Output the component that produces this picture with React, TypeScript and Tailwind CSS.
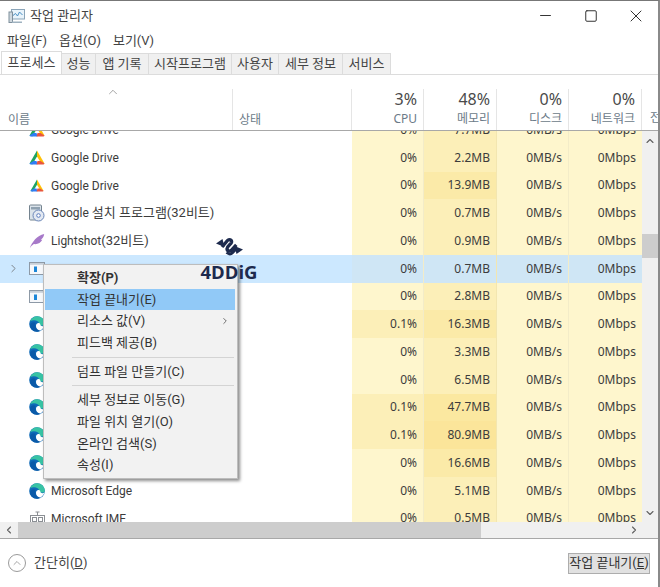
import { ChevronDown, ChevronLeft, ChevronRight, ChevronUp, Minus, Square, X } from 'lucide-react';

const font = { fontFamily: '"Noto Sans", "Noto Sans CJK KR", sans-serif' };
const nameFont = { fontFamily: 'Roboto, "Noto Sans CJK KR", sans-serif' };

type RowData = {
	latin?: string;
	name: string;
	icon: 'drive' | 'driveSmall' | 'setup' | 'feather' | 'app' | 'edge' | 'ime' | 'none';
	cpu: string;
	mem: string;
	memBg: string;
	selected?: boolean;
};

const rows: RowData[] = [
	{ latin: 'Google Drive', name: '', icon: 'drive', cpu: '0%', mem: '7.7MB', memBg: 'bg-[#fcefb8]' },
	{ latin: 'Google Drive', name: '', icon: 'drive', cpu: '0%', mem: '2.2MB', memBg: 'bg-[#fcefb8]' },
	{ latin: 'Google Drive', name: '', icon: 'driveSmall', cpu: '0%', mem: '13.9MB', memBg: 'bg-[#fbeaa8]' },
	{ latin: 'Google ', name: '설치 프로그램(32비트)', icon: 'setup', cpu: '0%', mem: '0.7MB', memBg: 'bg-[#fcefb8]' },
	{ latin: 'Lightshot', name: '(32비트)', icon: 'feather', cpu: '0%', mem: '0.9MB', memBg: 'bg-[#fcefb8]' },
	{ name: '', icon: 'app', cpu: '0%', mem: '0.7MB', memBg: 'bg-[#cfe6f5]', selected: true },
	{ name: '', icon: 'app', cpu: '0%', mem: '2.8MB', memBg: 'bg-[#fcefb8]' },
	{ name: '', icon: 'edge', cpu: '0.1%', mem: '16.3MB', memBg: 'bg-[#fbeaa8]' },
	{ name: '', icon: 'edge', cpu: '0%', mem: '3.3MB', memBg: 'bg-[#fcefb8]' },
	{ name: '', icon: 'edge', cpu: '0%', mem: '6.5MB', memBg: 'bg-[#fcefb8]' },
	{ name: '', icon: 'edge', cpu: '0.1%', mem: '47.7MB', memBg: 'bg-[#fbe8a0]' },
	{ name: '', icon: 'edge', cpu: '0.1%', mem: '80.9MB', memBg: 'bg-[#fbe59a]' },
	{ name: '', icon: 'edge', cpu: '0%', mem: '16.6MB', memBg: 'bg-[#fbeaa8]' },
	{ latin: 'Microsoft Edge', name: '', icon: 'edge', cpu: '0%', mem: '5.1MB', memBg: 'bg-[#fcefb8]' },
	{ latin: 'Microsoft IME', name: '', icon: 'ime', cpu: '0%', mem: '0.5MB', memBg: 'bg-[#fcefb8]' },
];

function DriveIcon({ size }: { size: number }) {
	return (
		<svg width={size} height={size - 1} viewBox="0 0 16 15">
			<path d="M8 .5 .5 13.500l2.800 1L8 6.500z" fill="#1fa463" />
			<path d="M8 .5l7.500 13-3 .3L8 6.500z" fill="#ffc107" />
			<path d="M.5 13.500c.3.800.8 1 1.500 1h6.500l-1-3.500H4.500z" fill="#2f7cf6" />
			<path d="M15.500 13.500c-.3.800-.8 1-1.500 1H7.500l1-3.500h3z" fill="#e8543f" />
		</svg>
	);
}

function EdgeIcon() {
	return (
		<svg width="16" height="16" viewBox="0 0 16 16">
			<circle cx="8" cy="8" r="7.800" fill="#0e6ab8" />
			<path d="M1 5.500C2.200 2.200 5 .2 8 .2c4.300 0 7.800 3.200 7.800 7.400 0 .8-.2 1.500-.8 2H10c0-2 .4-3-1-4C6.500 4 3.500 3.800 1 5.500z" fill="#38c3a4" />
			<path d="M7 9.500c.2-2 2-3 3.500-2.200 1 .6.7 1.800 1.500 2.500.8.600 2.200.500 3.300 0-.7 2.300-2.800 4.500-5 5.200-2.200-1-3.500-3-3.300-5.500z" fill="#fff" />
			<path d="M6.300 9.500c.3 2.600 2.400 4.900 5 4.900-1 .9-2.200 1.400-3.400 1.400-4 0-6.800-3.100-6.800-6.200 0-2 1.600-3.400 3.400-3.400.9 0 1.600.3 2.200.8-.4.6-.5 1.500-.4 2.500z" fill="#0a5aa8" />
		</svg>
	);
}

function AppIcon() {
	return (
		<svg width="16" height="13" viewBox="0 0 16 13">
			<rect x=".5" y=".5" width="15" height="12" fill="#f6f8fb" stroke="#8d99a6" />
			<rect x="1" y="1" width="14" height="1.800" fill="#c7d0d9" />
			<rect x="5" y="4.500" width="3" height="5.500" fill="#1b86d8" />
		</svg>
	);
}

function SetupIcon() {
	return (
		<svg width="18" height="18" viewBox="0 0 18 18">
			<rect x="1.500" y="1" width="12" height="15" rx="1" fill="#dbe3ea" stroke="#74838f" />
			<rect x="3" y="3" width="9" height="2.500" fill="#8fa1b0" />
			<circle cx="10.500" cy="11.500" r="5.500" fill="#e3e9f2" stroke="#6a86b8" />
			<circle cx="10.500" cy="11.500" r="1.800" fill="#fff" stroke="#5b7cc0" />
		</svg>
	);
}

function FeatherIcon() {
	return (
		<svg width="16" height="16" viewBox="0 0 16 16">
			<path d="M.8 15.200C3 9 8 2.500 15.200 1c-.4 3-1.700 4.800-3.400 5.500.7.400 1.100.4 1.500.3-1.500 3-4.600 4.800-8.500 4.300-1.500 1.100-3 2.500-4 4.100z" fill="#a779c9" />
		</svg>
	);
}

function ImeIcon() {
	return (
		<svg width="15" height="14" viewBox="0 0 15 14" fill="none" stroke="#8b8f94">
			<rect x=".5" y="4.500" width="14" height="8" />
			<rect x="2.500" y="6.500" width="4" height="4" />
			<rect x="8.500" y="6.500" width="4" height="4" />
			<path d="M7.500 4.500V1M5.500 1h4" />
		</svg>
	);
}

function TaskIcon() {
	return (
		<svg width="17" height="16" viewBox="0 0 17 16">
			<rect x="3.500" y="1.500" width="13" height="9.500" fill="#e8f3fb" stroke="#8aa4b8" />
			<path d="M5 7.500l2.500-2 2 2.500 2-4 3 3" fill="none" stroke="#4a90c4" />
			<rect x="1" y="4" width="3.500" height="10.500" fill="#cfd8df" stroke="#7f8f9c" />
			<path d="M4 13.500h10v1.500H4z" fill="#9fb2c0" />
		</svg>
	);
}

function RowIcon({ icon }: { icon: RowData['icon'] }) {
	if (icon === 'drive') return <DriveIcon size={16} />;
	if (icon === 'driveSmall') return <DriveIcon size={14} />;
	if (icon === 'edge') return <EdgeIcon />;
	if (icon === 'app') return <AppIcon />;
	if (icon === 'setup') return <SetupIcon />;
	if (icon === 'feather') return <FeatherIcon />;
	if (icon === 'ime') return <ImeIcon />;
	return null;
}

function Row({ row }: { row: RowData }) {
	const base = row.selected ? 'bg-[#cce8ff]' : '';
	const cell = row.selected ? 'bg-[#cfe6f5]' : 'bg-[#fef6cd]';
	const cpuBg = row.selected ? 'bg-[#cfe6f5]' : row.cpu === '0.1%' ? 'bg-[#fcefb8]' : 'bg-[#fef6cd]';
	return (
		<div className={`flex h-[27.75px] shrink-0 items-center text-[12px] text-[#3c3c3c] ${base}`}>
			<div className="flex h-full w-[233px] shrink-0 items-center">
				<span className="flex w-[26px] shrink-0 justify-start pl-[7px]">
					{row.selected && <ChevronRight size={13} strokeWidth={1.800} className="text-[#7a8288]" />}
				</span>
				<span className="flex w-[22px] shrink-0 justify-center">
					<RowIcon icon={row.icon} />
				</span>
				<span style={nameFont} className="whitespace-pre pl-[3px] text-[13px]">
					{row.latin && <span className="text-[12px]">{row.latin}</span>}
					{row.name}
				</span>
			</div>
			<div className="h-full w-[119px] shrink-0" />
			<div className={`flex h-full w-[72px] shrink-0 items-center justify-end border-r border-[#f3ecc8] pr-[6px] ${cpuBg}`}>{row.cpu}</div>
			<div className={`flex h-full w-[73px] shrink-0 items-center justify-end border-r border-[#f3e6b0] pr-[6px] ${row.memBg}`}>{row.mem}</div>
			<div className={`flex h-full w-[72px] shrink-0 items-center justify-end border-r border-[#f3ecc8] pr-[6px] ${cell}`}>0MB/s</div>
			<div className={`flex h-full w-[73px] shrink-0 items-center justify-end pr-[6px] ${cell}`}>0Mbps</div>
		</div>
	);
}

function HeaderCell({ pct, label, width }: { pct: string; label: string; width: string }) {
	return (
		<div className={`flex h-full shrink-0 flex-col items-end border-r border-[#e5e5e5] pr-[6px] ${width}`}>
			<span className="text-[16px] leading-[20px] text-[#4a4a4a]">{pct}</span>
			<span className="mt-[2px] text-[12px] leading-[16px] text-[#6b7a88]">{label}</span>
		</div>
	);
}

function MenuItem({ label, bold, active, arrow }: { label: string; bold?: boolean; active?: boolean; arrow?: boolean }) {
	return (
		<div className={`ml-[1px] mr-[2px] flex h-[22px] items-center justify-between pl-[32px] pr-[5px] text-[13px] ${bold ? 'font-bold' : ''} ${active ? 'bg-[#91c9f7]' : ''}`}>
			<span style={nameFont} className="whitespace-nowrap">{label}</span>
			{arrow && <ChevronRight size={10} strokeWidth={2} className="text-[#555]" />}
		</div>
	);
}

export default function App() {
	return (
		<div style={font} className="relative flex h-[587px] w-[660px] flex-col overflow-hidden border-r-2 border-t border-r-[#8a8a8a] border-t-[#777] bg-white text-[#333]">
			{/* title bar */}
			<div className="flex h-[29px] shrink-0 items-center pl-[8px]">
				<TaskIcon />
				<span style={nameFont} className="ml-[5px] text-[13px] text-[#444]">작업 관리자</span>
				<div className="ml-auto flex items-center text-[#333]">
					<span className="flex w-[45px] justify-center"><Minus size={17} strokeWidth={1.400} /></span>
					<span className="flex w-[45px] justify-center"><Square size={14} strokeWidth={1.700} /></span>
					<span className="flex w-[45px] justify-center"><X size={20} strokeWidth={1.200} /></span>
				</div>
			</div>
			{/* menu */}
			<div style={nameFont} className="flex h-[22px] shrink-0 items-center gap-[12px] pl-[7px] text-[13px] text-[#444]">
				<span>파일(F)</span>
				<span>옵션(O)</span>
				<span>보기(V)</span>
			</div>
			{/* tabs */}
			<div style={nameFont} className="flex h-[23px] shrink-0 items-end border-b border-[#dcdcdc] pl-[1px] text-[13px] text-[#444]">
				<div className="flex h-[23px] w-[61px] items-center justify-center border border-b-0 border-[#dcdcdc] bg-white">프로세스</div>
				<div className="flex h-[21px] w-[34px] items-center justify-center border-r border-t border-[#dcdcdc] bg-[#f0f0f0]">성능</div>
				<div className="flex h-[21px] w-[53px] items-center justify-center border-r border-t border-[#dcdcdc] bg-[#f0f0f0]">앱 기록</div>
				<div className="flex h-[21px] w-[83px] items-center justify-center border-r border-t border-[#dcdcdc] bg-[#f0f0f0]">시작프로그램</div>
				<div className="flex h-[21px] w-[47px] items-center justify-center border-r border-t border-[#dcdcdc] bg-[#f0f0f0]">사용자</div>
				<div className="flex h-[21px] w-[64px] items-center justify-center border-r border-t border-[#dcdcdc] bg-[#f0f0f0]">세부 정보</div>
				<div className="flex h-[21px] w-[48px] items-center justify-center border-r border-t border-[#dcdcdc] bg-[#f0f0f0]">서비스</div>
			</div>
			{/* column header */}
			<div className="flex h-[56px] shrink-0 overflow-hidden border-b border-[#a8a8a8] pt-[14px]">
				<div className="relative h-full w-[233px] shrink-0 border-r border-[#e5e5e5] pl-[8px]">
					<ChevronUp size={14} strokeWidth={1.300} className="absolute left-[106px] top-[-4px] text-[#888]" />
					<span className="absolute bottom-[1px] text-[12px] text-[#6b7a88]">이름</span>
				</div>
				<div className="relative h-full w-[119px] shrink-0 border-r border-[#e5e5e5] pl-[6px]">
					<span className="absolute bottom-[1px] text-[12px] text-[#6b7a88]">상태</span>
				</div>
				<HeaderCell pct="3%" label="CPU" width="w-[72px]" />
				<HeaderCell pct="48%" label="메모리" width="w-[73px]" />
				<HeaderCell pct="0%" label="디스크" width="w-[72px]" />
				<HeaderCell pct="0%" label="네트워크" width="w-[73px]" />
				<span className="self-end whitespace-nowrap pb-[3px] pl-[8px] text-[12px] text-[#6b7a88]">전</span>
			</div>
			{/* rows + vertical scrollbar */}
			<div className="flex min-h-0 flex-1">
				<div className="h-full w-[642px] shrink-0 overflow-hidden">
					<div className="mt-[-15px] flex flex-col">
						{rows.map((row, i) => (
							<Row key={i} row={row} />
						))}
					</div>
				</div>
				<div className="flex w-[16px] shrink-0 flex-col items-center bg-[#f0f0f0]">
					<ChevronUp size={12} strokeWidth={2.200} className="mt-[4px] text-[#606060]" />
					<div className="mt-[87px] h-[24px] w-full bg-[#cdcdcd]" />
					<ChevronDown size={12} strokeWidth={2.200} className="mb-[3px] mt-auto text-[#606060]" />
				</div>
			</div>
			{/* horizontal scrollbar */}
			<div className="flex h-[17px] shrink-0 items-center border-b border-[#a8a8a8] bg-[#f0f0f0] pr-[16px]">
				<ChevronLeft size={12} strokeWidth={2.200} className="ml-[3px] text-[#606060]" />
				<div className="ml-[3px] h-full w-[463px] bg-[#cdcdcd]" />
				<ChevronRight size={12} strokeWidth={2.200} className="ml-auto mr-[2px] text-[#606060]" />
			</div>
			{/* footer */}
			<div className="flex h-[48px] shrink-0 items-center pl-[8px]">
				<span className="flex h-[18px] w-[18px] items-center justify-center rounded-full border border-[#9a9a9a]">
					<ChevronUp size={12} strokeWidth={1.300} className="text-[#777]" />
				</span>
				<span style={nameFont} className="ml-[8px] text-[13px] text-[#444]">
					간단히(<span className="underline">D</span>)
				</span>
				<button style={nameFont} className="ml-auto mr-[8px] flex h-[21px] w-[82px] items-center justify-center whitespace-nowrap border border-[#adadad] bg-[#e1e1e1] text-[13px] text-[#333]">
					작업 끝내기(<span className="underline">E</span>)
				</button>
			</div>

			{/* context menu */}
			<div className="absolute left-[43px] top-[263px] flex h-[215px] w-[195px] flex-col border border-[#bdbdbd] bg-[#f2f2f2] py-[2px] text-[#333] shadow-[2px_2px_3px_rgba(0,0,0,0.45)]">
				<MenuItem label="확장(P)" bold />
				<MenuItem label="작업 끝내기(E)" active />
				<MenuItem label="리소스 값(V)" arrow />
				<MenuItem label="피드백 제공(B)" />
				<div className="my-[3px] ml-[28px] mr-[3px] h-px bg-[#d4d4d4]" />
				<MenuItem label="덤프 파일 만들기(C)" />
				<div className="my-[3px] ml-[28px] mr-[3px] h-px bg-[#d4d4d4]" />
				<MenuItem label="세부 정보로 이동(G)" />
				<MenuItem label="파일 위치 열기(O)" />
				<MenuItem label="온라인 검색(S)" />
				<MenuItem label="속성(I)" />
			</div>

			{/* watermark */}
			<div className="absolute left-[199px] top-[235px] flex w-[60px] flex-col items-center">
				<svg width="27" height="21" viewBox="0 0 27 21" fill="none" stroke="#1d2a4d" strokeWidth="3.400">
					<path d="M6 11 11.500 4.500c1.500-1.800 4.500-.5 4 1.800-.5 2-4.500 3.500-4.500 6.500 0 2.300 2.800 3 4.300 1.500l5-5.500" />
					<path d="M10.500 16.500c2 1.500 4.500 1.800 6 .3l4.500-4.800" strokeWidth="2.800" />
					<path d="M0 7.500 6.500 3 8.500 11z" fill="#1d2a4d" stroke="none" />
					<path d="M27 13.500 20.500 18 18.500 10z" fill="#1d2a4d" stroke="none" />
				</svg>
				<span className="mt-[5px] text-[18.500px] font-bold leading-[20px] text-[#1d2a4d]" style={{ fontFamily: '"Open Sans", sans-serif' }}>4DDiG</span>
			</div>
		</div>
	);
}
